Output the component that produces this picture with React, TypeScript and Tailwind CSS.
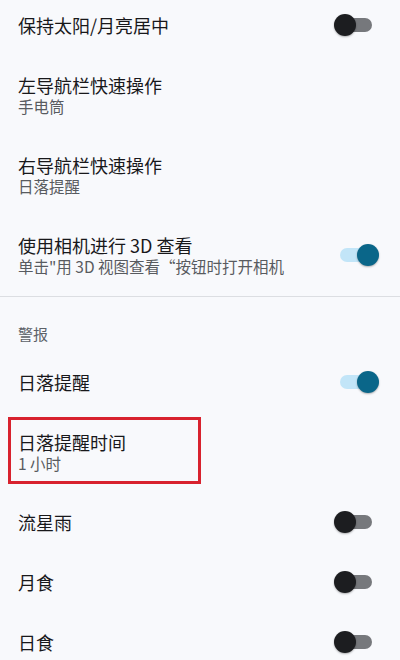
import React from "react";

const font = { fontFamily: '"Noto Sans CJK SC", "Noto Sans", sans-serif' };

function Toggle({ on }: { on: boolean }) {
  return (
    <div className="relative h-[24px] w-[46px] shrink-0">
      <div
        className={`absolute left-[6px] top-[5px] h-[14px] w-[32px] rounded-full ${
          on ? "bg-[#c2e5f8]" : "bg-[#76787c]"
        }`}
      />
      <div
        className={`absolute top-[1px] h-[22px] w-[22px] rounded-full shadow-[0_1px_2px_rgba(0,0,0,0.3)] ${
          on ? "left-[23px] bg-[#0a6689]" : "left-0 bg-[#1c1d20]"
        }`}
      />
    </div>
  );
}

function Row({
  title,
  sub,
  toggle,
  h,
  extra,
}: {
  title: string;
  sub?: string;
  toggle?: boolean;
  h: string;
  extra?: React.ReactNode;
}) {
  return (
    <div className={`relative flex items-center pl-[18px] pr-[20px] ${h}`}>
      <div className="flex min-w-0 flex-1 flex-col">
        <div className="text-[18px] leading-[22px] text-[#18181b]">{title}</div>
        {sub && <div className="text-[15.5px] leading-[20px] text-[#585b60]">{sub}</div>}
      </div>
      {toggle !== undefined && <Toggle on={toggle} />}
      {extra}
    </div>
  );
}

export default function App() {
  return (
    <div className="h-[660px] w-[400px] overflow-hidden bg-[#f8f9fc]" style={font}>
      <div className="flex flex-col">
        <div className="flex h-[55px] items-center pb-[5px] pl-[18px] pr-[20px]">
          <div className="flex-1 text-[18px] leading-[22px] text-[#18181b]">保持太阳/月亮居中</div>
          <Toggle on={false} />
        </div>
        <Row h="h-[80px]" title="左导航栏快速操作" sub="手电筒" />
        <Row h="h-[80px]" title="右导航栏快速操作" sub="日落提醒" />
        <Row
          h="h-[80px]"
          title="使用相机进行 3D 查看"
          sub={"单击\"用 3D 视图查看“按钮时打开相机"}
          toggle={true}
        />
        <div className="mt-[1px] h-px bg-[#dcdee2]" />
        <div className="flex h-[55px] items-end pb-[8px] pl-[18px]">
          <div className="text-[15px] leading-[20px] text-[#5c6168]">警报</div>
        </div>
        <Row h="h-[60px]" title="日落提醒" toggle={true} />
        <Row
          h="h-[80px]"
          title="日落提醒时间"
          sub="1 小时"
          extra={
            <div className="pointer-events-none absolute left-[8px] top-[5px] h-[67px] w-[193px] border-[3px] border-[#d8222e]" />
          }
        />
        <Row h="h-[60px]" title="流星雨" toggle={false} />
        <Row h="h-[60px]" title="月食" toggle={false} />
        <Row h="h-[60px]" title="日食" toggle={false} />
      </div>
    </div>
  );
}
